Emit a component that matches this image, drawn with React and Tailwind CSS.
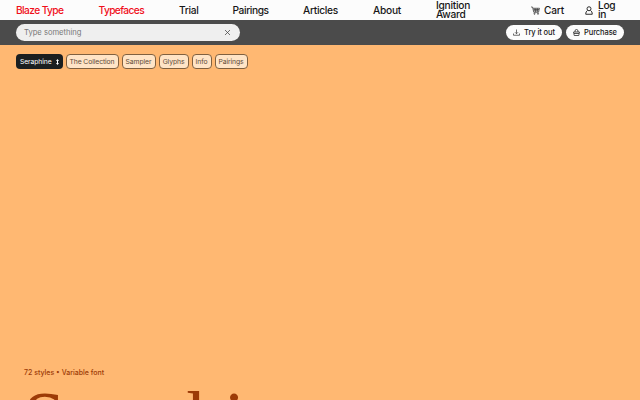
const links = [
  { label: 'Blaze Type', box: 'w-[82.5px] tracking-[-0.6px]', text: 'text-[#f00f1a]' },
  { label: 'Typefaces', box: 'w-[80.5px] tracking-[-0.6px]', text: 'text-[#f00f1a]' },
  { label: 'Trial', box: 'w-[53.5px] tracking-[-0.3px]', text: 'text-[#171717]' },
  { label: 'Pairings', box: 'w-[70.5px] tracking-[-0.4px]', text: 'text-[#171717]' },
  { label: 'Articles', box: 'w-[70px] tracking-[-0.3px]', text: 'text-[#171717]' },
  { label: 'About', box: 'w-[63px] tracking-[-0.25px]', text: 'text-[#171717]' },
];

const sections = [
  { label: 'The Collection', width: 'w-[53px]' },
  { label: 'Sampler', width: 'w-[34px]' },
  { label: 'Glyphs', width: 'w-[30px]' },
  { label: 'Info', width: 'w-5' },
  { label: 'Pairings', width: 'w-[33px]' },
];

const CartIcon = () => (
  <svg className="h-[9px] w-[9px]" viewBox="0 0 18 18" fill="none" stroke="#222" strokeWidth="1.3">
    <path d="M0 2h3l2.500 10.500h9.500L17 4.500H4M5 7h11M5 9.500h10M8 4.500l1 8M12.500 4.500v8" />
    <circle cx="7" cy="15.500" r="1.2" />
    <circle cx="14" cy="15.500" r="1.2" />
  </svg>
);

const UserIcon = () => (
  <svg className="h-[9px] w-2" viewBox="0 0 16 18" fill="none" stroke="#222" strokeWidth="1.9">
    <circle cx="8" cy="5.500" r="4" />
    <path d="M5 9c-2.500 1.500-3.500 4-3.500 7.500h13c0-3.500-1-6-3.500-7.500" />
  </svg>
);

const DownloadIcon = () => (
  <svg className="h-[7px] w-[7px]" viewBox="0 0 14 14" fill="none" stroke="#222" strokeWidth="1.3">
    <path d="M7 1v8M4 6.500l3 3 3-3M1 9v3.500h12V9" />
  </svg>
);

const BasketIcon = () => (
  <svg className="h-[7px] w-[7px]" viewBox="0 0 14 14" fill="none" stroke="#222" strokeWidth="1.5">
    <path d="M4 6V4a3 3 0 0 1 6 0v2M1 6h12l-1.500 7h-9zM2 9h10" />
  </svg>
);

export default function App() {
  return (
    <div className="h-[400px] w-[640px] overflow-hidden bg-[#ffb872] font-['Inter','Liberation_Sans',sans-serif]">
      <header className="flex h-5 items-center bg-[#fcfcfc] pl-4 text-[10.2px] leading-[9px] text-[#171717]">
        <nav className="flex items-center">
          {links.map((link) => (
            <a key={link.label} className={`${link.box} ${link.text} shrink-0 font-medium whitespace-nowrap`}>
              {link.label}
            </a>
          ))}
          <a className="w-[95px] font-medium tracking-[-0.25px]">Ignition<br />Award</a>
        </nav>
        <a className="flex w-[54px] items-center gap-1 font-medium tracking-[-0.2px]">
          <CartIcon />
          Cart
        </a>
        <a className="flex items-center gap-[5px] font-medium tracking-[-0.3px]">
          <UserIcon />
          <span>Log<br />in</span>
        </a>
      </header>

      <div className="flex h-[25px] items-center justify-between bg-[#4b4b4b] pr-4 pl-4">
        <div className="flex h-[17px] w-56 items-center justify-between rounded-full bg-[#efefef] px-2 text-[7.6px] text-[#777]">
          <span>Type something</span>
          <svg className="mr-0.5 h-[5px] w-[5px]" viewBox="0 0 10 10" stroke="#444" strokeWidth="1.5">
            <path d="M0 0l10 10M10 0L0 10" />
          </svg>
        </div>
        <div className="flex gap-1 text-[7.5px] font-medium tracking-[-0.1px] text-[#171717]">
          <button className="flex h-[15px] w-14 items-center justify-center gap-1 rounded-full bg-[#fcfcfc] whitespace-nowrap">
            <DownloadIcon />
            Try it out
          </button>
          <button className="flex h-[15px] w-[58px] items-center justify-center gap-1 rounded-full bg-[#fcfcfc] whitespace-nowrap">
            <BasketIcon />
            Purchase
          </button>
        </div>
      </div>

      <div className="flex gap-[3px] pt-[9px] pl-4 text-[6.8px] tracking-[-0.1px]">
        <button className="flex h-[15px] w-[46.5px] items-center justify-between rounded bg-[#1b1f20] pt-px pr-1 pl-1 text-white">
          Seraphine
          <svg className="h-[6px] w-[3px]" viewBox="0 0 6 12" fill="white">
            <path d="M3 0l3 4H4v4h2l-3 4-3-4h2V4H0z" />
          </svg>
        </button>
        {sections.map((section) => (
          <a
            key={section.label}
            className={`${section.width} flex h-[15px] items-center justify-center rounded border border-[#80603f] bg-[#ffe4c6] pt-px whitespace-nowrap text-[#5d4b38]`}
          >
            {section.label}
          </a>
        ))}
      </div>

      <main className="pt-[298px] pl-6 text-[#9d3b07]">
        <p className="text-[7px] leading-[12px] font-medium">72 styles • Variable font</p>
        <h1 className="mt-[3px] -ml-px font-['Liberation_Serif',serif] text-[76px] leading-[72px] tracking-[-1px]">
          <span className="tracking-[-5px]">S</span>eraphine
        </h1>
      </main>
    </div>
  );
}
